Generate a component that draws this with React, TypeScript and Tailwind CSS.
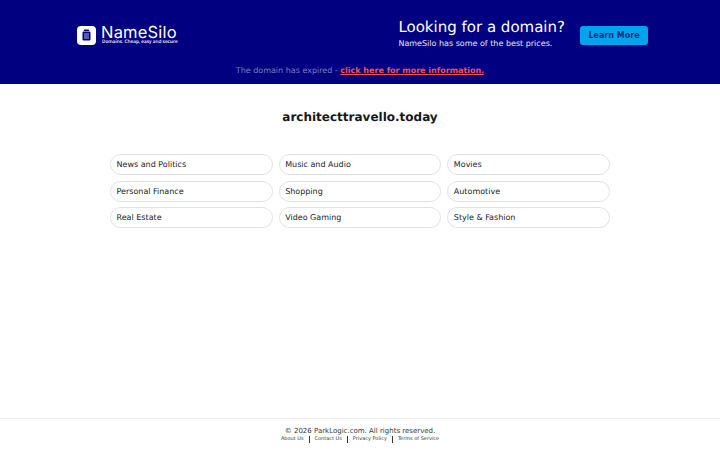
const font = { fontFamily: '"DejaVu Sans", sans-serif' };

const topics = [
  "News and Politics",
  "Music and Audio",
  "Movies",
  "Personal Finance",
  "Shopping",
  "Automotive",
  "Real Estate",
  "Video Gaming",
  "Style & Fashion",
];

const footerLinks = ["About Us", "Contact Us", "Privacy Policy", "Terms of Service"];

function Logo() {
  return (
    <div className="flex items-center gap-[5px]">
      <div className="w-[19px] h-[19px] bg-white rounded-[4px] flex items-center justify-center">
        <svg width="9" height="12" viewBox="0 0 9 12">
          <path d="M2.5 0.5h4l1 1.5H1.5z" fill="#000080" />
          <rect x="0.5" y="2.5" width="8" height="9" rx="1.2" fill="#000080" />
          <path d="M2 5h5M2 7h5M2 9h5" stroke="#ffffff" strokeWidth="0.7" />
        </svg>
      </div>
      <div className="flex flex-col gap-[1px]">
        <span className="font-['Inter',sans-serif] text-white text-[16.5px] leading-[14px] font-normal tracking-[0.2px]">NameSilo</span>
        <span className="font-['Open_Sans',sans-serif] text-white text-[4.7px] leading-[5px] font-semibold whitespace-nowrap pl-[1px]">Domains. Cheap, easy and secure</span>
      </div>
    </div>
  );
}

export default function App() {
  return (
    <div className="w-[720px] h-[450px] bg-white flex flex-col overflow-hidden [text-rendering:geometricPrecision]" style={font}>
      {/* HEADER */}
      <header className="h-[84px] bg-[#000080] flex flex-col">
        <div className="h-[62px] pt-[8px] pl-[77px] pr-[72px] flex items-center justify-between">
          <Logo />
          <div className="flex items-center gap-[15px]">
            <div className="flex flex-col pb-[2px]">
              <span className="text-white text-[15px] leading-[20px]">Looking for a domain?</span>
              <span className="text-white/90 text-[8px] leading-[14px]">NameSilo has some of the best prices.</span>
            </div>
            <button className="w-[68px] h-[19px] pt-[1px] rounded-[3px] bg-[#00a3ee] text-[#00307f] text-[8px] font-bold">
              Learn More
            </button>
          </div>
        </div>
        <p className="text-center text-[8px] leading-[18px] text-[#7f7fb8]">
          The domain has expired -{" "}
          <a className="font-bold underline text-[#ef5350]">click here for more information.</a>
        </p>
      </header>

      {/* MAIN */}
      <main className="flex-1 flex flex-col items-center">
        <h1 className="mt-[23px] text-[12px] leading-[20px] font-bold text-[#16181d]">architecttravello.today</h1>
        <div className="mt-[27px] w-[500px] grid grid-cols-3 gap-x-[6px] gap-y-[5.5px]">
          {topics.map((t) => (
            <div
              key={t}
              className="h-[21px] rounded-full border border-[#dee2e6] pl-[5.5px] pt-[1px] flex items-center text-[8px] text-[#212529]"
            >
              {t}
            </div>
          ))}
        </div>
      </main>

      {/* FOOTER */}
      <footer className="h-[32px] border-t border-[#eeeeee] flex flex-col items-center pt-[7px]">
        <p className="text-[7px] leading-[10px] text-[#343a40]">© 2026 ParkLogic.com. All rights reserved.</p>
        <div className="flex items-center">
          {footerLinks.map((l, i) => (
            <span
              key={l}
              className={`text-[5px] leading-[7px] text-[#343a40] px-[5px] ${i > 0 ? "border-l border-[#343a40]" : ""}`}
            >
              {l}
            </span>
          ))}
        </div>
      </footer>
    </div>
  );
}
